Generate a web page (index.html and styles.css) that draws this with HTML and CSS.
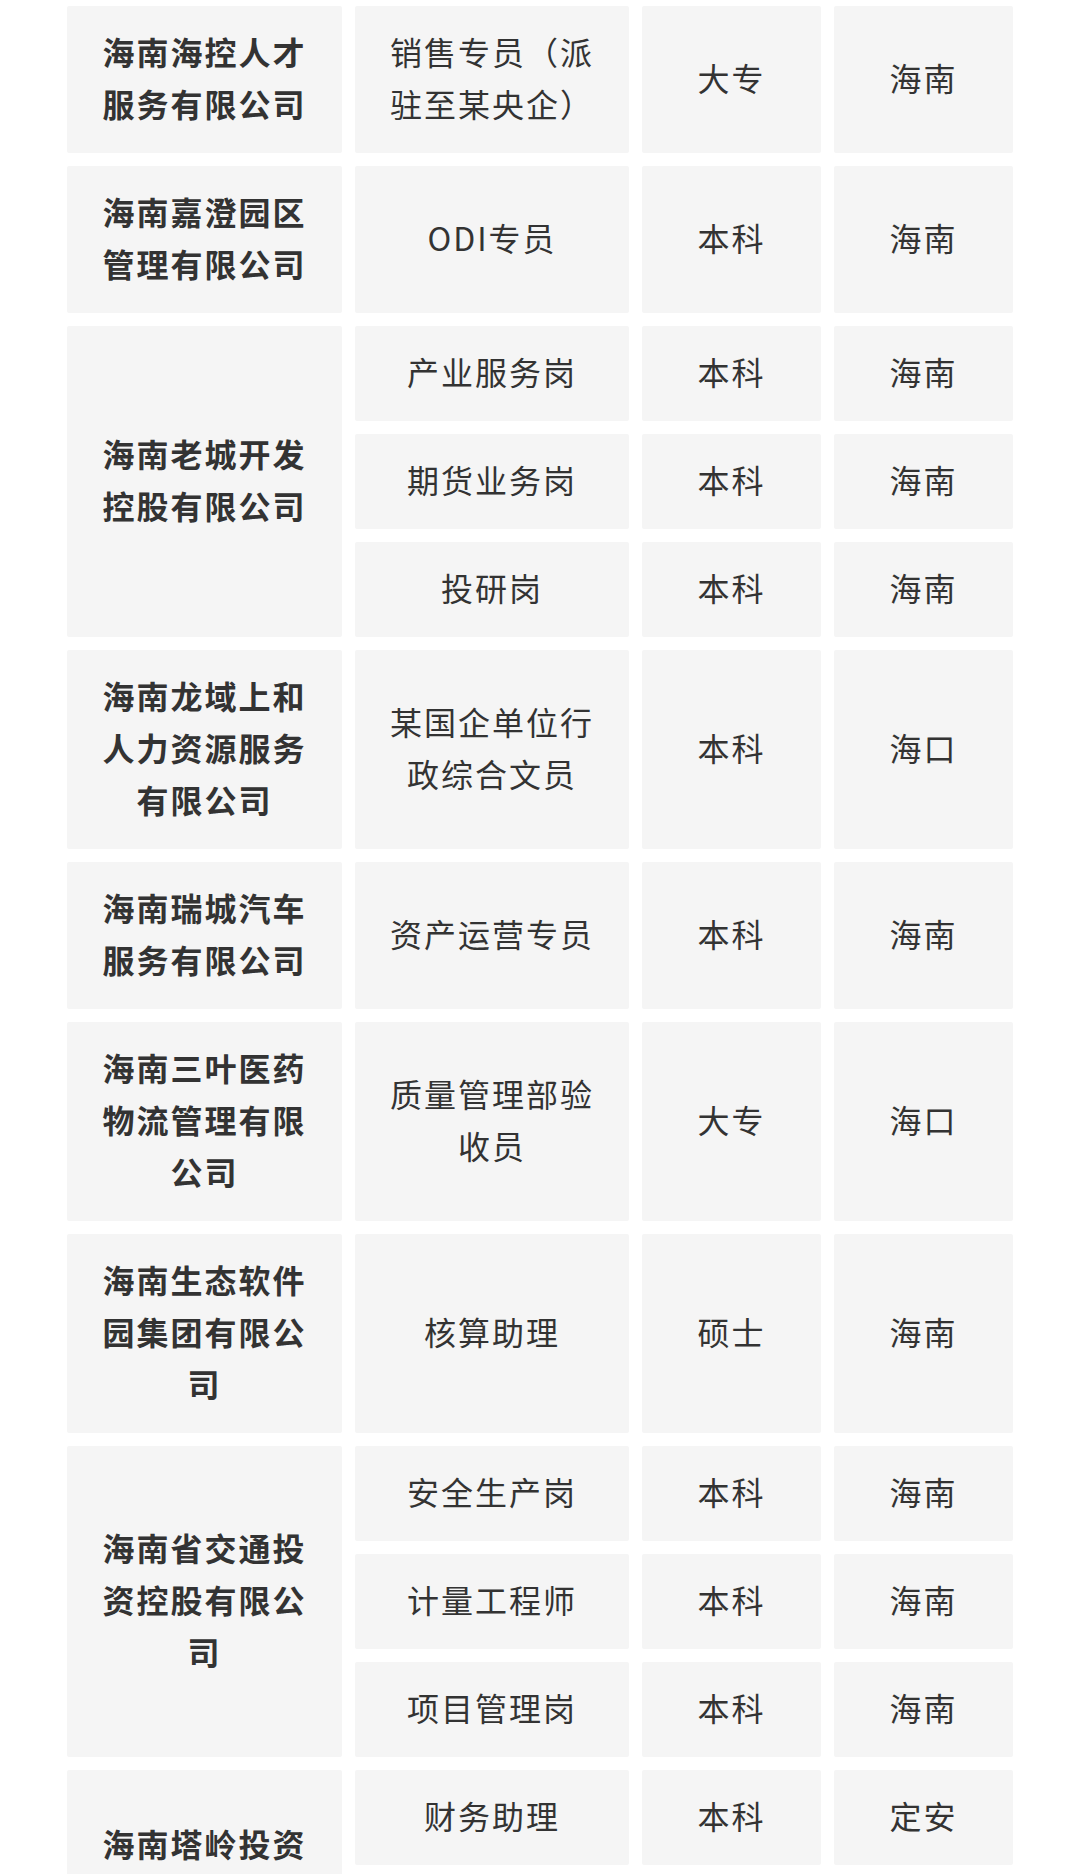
FILE: index.html
```html
<!DOCTYPE html>
<html lang="zh-CN">
<head>
<meta charset="utf-8">
<title>岗位表</title>
<link rel="stylesheet" href="styles.css">
</head>
<body>
<div class="table">
  <div class="cell co">海南海控人才服务有限公司</div>
  <div class="cell">销售专员（派驻至某央企）</div>
  <div class="cell">大专</div>
  <div class="cell">海南</div>

  <div class="cell co">海南嘉澄园区管理有限公司</div>
  <div class="cell">ODI专员</div>
  <div class="cell">本科</div>
  <div class="cell">海南</div>

  <div class="cell co span3">海南老城开发控股有限公司</div>
  <div class="cell">产业服务岗</div>
  <div class="cell">本科</div>
  <div class="cell">海南</div>
  <div class="cell">期货业务岗</div>
  <div class="cell">本科</div>
  <div class="cell">海南</div>
  <div class="cell">投研岗</div>
  <div class="cell">本科</div>
  <div class="cell">海南</div>

  <div class="cell co">海南龙域上和人力资源服务有限公司</div>
  <div class="cell">某国企单位行政综合文员</div>
  <div class="cell">本科</div>
  <div class="cell">海口</div>

  <div class="cell co">海南瑞城汽车服务有限公司</div>
  <div class="cell">资产运营专员</div>
  <div class="cell">本科</div>
  <div class="cell">海南</div>

  <div class="cell co">海南三叶医药物流管理有限公司</div>
  <div class="cell">质量管理部验收员</div>
  <div class="cell">大专</div>
  <div class="cell">海口</div>

  <div class="cell co">海南生态软件园集团有限公司</div>
  <div class="cell">核算助理</div>
  <div class="cell">硕士</div>
  <div class="cell">海南</div>

  <div class="cell co span3">海南省交通投资控股有限公司</div>
  <div class="cell">安全生产岗</div>
  <div class="cell">本科</div>
  <div class="cell">海南</div>
  <div class="cell">计量工程师</div>
  <div class="cell">本科</div>
  <div class="cell">海南</div>
  <div class="cell">项目管理岗</div>
  <div class="cell">本科</div>
  <div class="cell">海南</div>

  <div class="cell co span2">海南塔岭投资有限公司</div>
  <div class="cell">财务助理</div>
  <div class="cell">本科</div>
  <div class="cell">定安</div>
  <div class="cell">工程管理岗</div>
  <div class="cell">本科</div>
  <div class="cell">定安</div>
</div>
</body>
</html>
```

FILE: styles.css
```css
html, body {
  margin: 0;
  padding: 0;
  background: #ffffff;
}

body {
  padding-top: 6px;
  font-family: "Noto Sans CJK SC", "Noto Sans", sans-serif;
  color: #333333;
  overflow: hidden;
}

.table {
  display: grid;
  grid-template-columns: 275px 274px 179px 179px;
  gap: 13px;
  justify-content: center;
}

.cell {
  display: flex;
  align-items: center;
  justify-content: center;
  text-align: center;
  background: #f5f5f5;
  border-radius: 2px;
  padding: 19px 30px 24px;
  font-size: 32px;
  line-height: 52px;
  letter-spacing: 2px;
  font-weight: 400;
}

.co {
  font-weight: 700;
  color: #333333;
}

.span2 {
  grid-row: span 2;
}

.span3 {
  grid-row: span 3;
}
```
